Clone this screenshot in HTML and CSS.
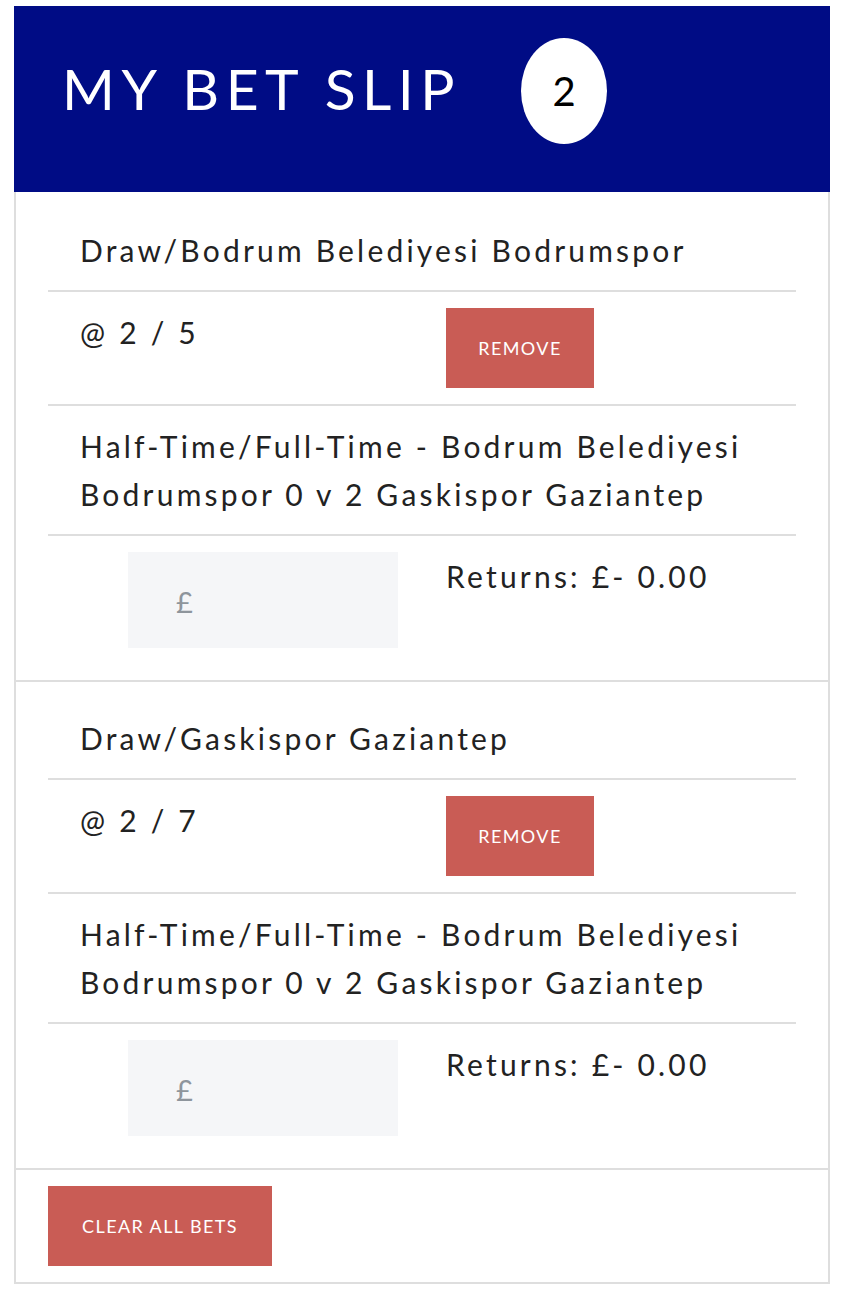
FILE: index.html
```html
<!DOCTYPE html>
<html lang="en">
<head>
<meta charset="utf-8">
<title>My Bet Slip</title>
<link rel="stylesheet" href="styles.css">
</head>
<body>
<div class="slip">
  <header class="slip-head">
    <h1 class="slip-title">MY BET SLIP</h1>
    <span class="slip-count">2</span>
  </header>
  <div class="slip-body">
    <section class="bet">
      <div class="row row-text">Draw/Bodrum Belediyesi Bodrumspor</div>
      <div class="row row-split">
        <span class="odds">@ 2 / 5</span>
        <div><button class="btn btn-remove">REMOVE</button></div>
      </div>
      <div class="row row-text">Half-Time/Full-Time - Bodrum Belediyesi Bodrumspor 0 v 2 Gaskispor Gaziantep</div>
      <div class="row row-split">
        <div class="stake-wrap"><input class="stake" type="text" placeholder="£"></div>
        <span class="returns">Returns: £- 0.00</span>
      </div>
    </section>
    <section class="bet">
      <div class="row row-text">Draw/Gaskispor Gaziantep</div>
      <div class="row row-split">
        <span class="odds">@ 2 / 7</span>
        <div><button class="btn btn-remove">REMOVE</button></div>
      </div>
      <div class="row row-text">Half-Time/Full-Time - Bodrum Belediyesi Bodrumspor 0 v 2 Gaskispor Gaziantep</div>
      <div class="row row-split">
        <div class="stake-wrap"><input class="stake" type="text" placeholder="£"></div>
        <span class="returns">Returns: £- 0.00</span>
      </div>
    </section>
    <div class="slip-foot">
      <button class="btn btn-clear">CLEAR ALL BETS</button>
    </div>
  </div>
</div>
</body>
</html>
```

FILE: styles.css
```css
* { box-sizing: border-box; }
html, body { margin: 0; padding: 0; background: #fff; }
body {
  font-family: Lato, "Open Sans", "Liberation Sans", sans-serif;
  color: #222;
  padding: 6px 14px 0;
}
.slip { width: 816px; }
.slip-head {
  background: #000c85;
  height: 186px;
  display: flex;
  align-items: flex-start;
  padding: 32px 0 0 48px;
}
.slip-title {
  margin: 17px 0 0;
  font-size: 57px;
  font-weight: 400;
  letter-spacing: 6.5px;
  line-height: 66px;
  color: #fff;
}
.slip-count {
  margin-left: 60px;
  width: 86px;
  height: 106px;
  border-radius: 50%;
  background: #fff;
  color: #000;
  font-size: 40px;
  display: flex;
  align-items: center;
  justify-content: center;
}
.slip-body {
  border: 2px solid #dedede;
  border-top: 0;
}
.bet {
  padding: 16px 32px;
  border-bottom: 2px solid #dedede;
}
.bet:first-child { padding-top: 18px; }
.row {
  padding: 16px 0;
  border-bottom: 2px solid #dedede;
  font-size: 30px;
  line-height: 48px;
  letter-spacing: 3.2px;
}
.row:last-child { border-bottom: 0; }
.row-text { padding-left: 32px; padding-right: 16px; }
.row-split {
  display: grid;
  grid-template-columns: 366px 1fr;
  padding-left: 32px;
}
.odds { display: block; }
.btn {
  border: 0;
  background: #c95c55;
  color: #fff;
  font-family: Lato, "Open Sans", "Liberation Sans", sans-serif;
  font-size: 18px;
  letter-spacing: 1.4px;
  height: 80px;
  cursor: pointer;
}
.btn-remove { width: 148px; }
.stake-wrap { padding-left: 48px; }
.stake {
  display: block;
  width: 270px;
  height: 96px;
  border: 0;
  background: #f5f6f8;
  padding: 2px 0 0 48px;
  font-family: Lato, "Open Sans", "Liberation Sans", sans-serif;
  font-size: 29px;
}
.stake::placeholder { color: #8e959c; }
.slip-foot { padding: 16px 32px; }
.btn-clear { width: 224px; }
```
